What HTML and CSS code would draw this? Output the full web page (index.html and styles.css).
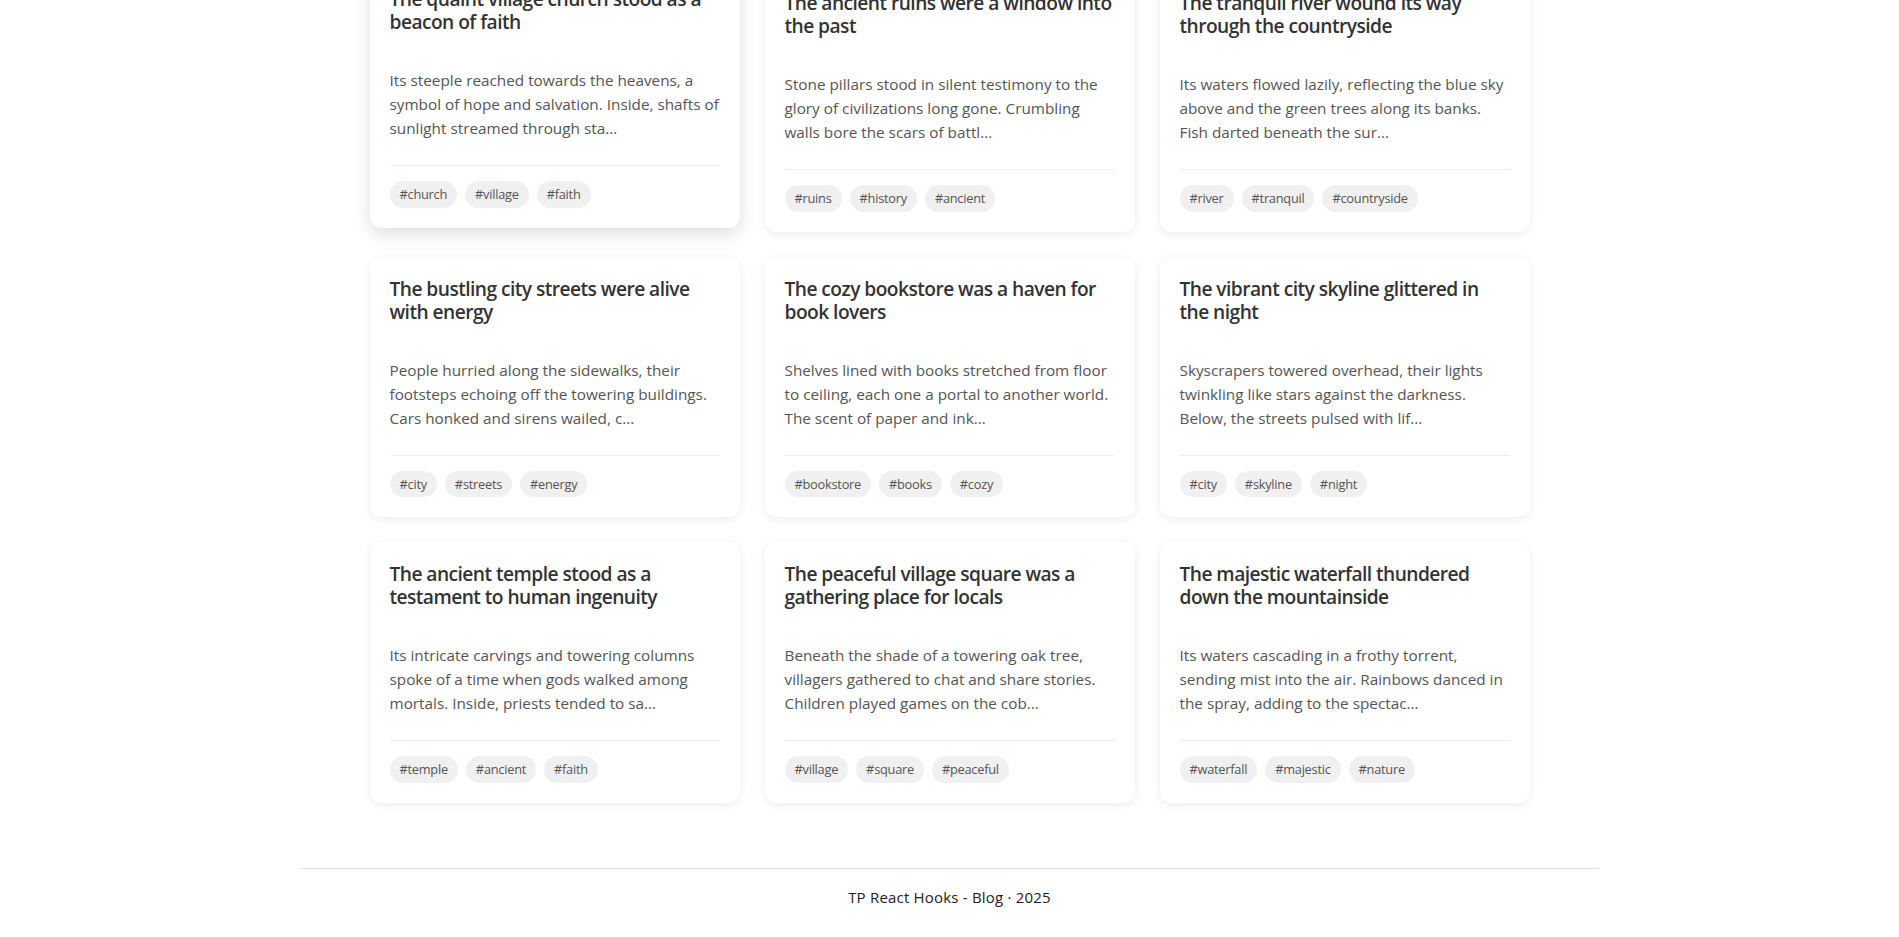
FILE: index.html
```html
<!DOCTYPE html>
<html lang="fr">
<head>
<meta charset="utf-8">
<title>TP React Hooks - Blog</title>
<link rel="stylesheet" href="styles.css">
</head>
<body>
<div class="app">
  <header class="site-header">
    <h1 class="site-title">Blog</h1>
  </header>
  <main class="container">
    <section class="post-grid">
      <article class="card card--hover">
        <h2 class="card-title">The quaint village church stood as a beacon of faith</h2>
        <p class="card-excerpt">Its steeple reached towards the heavens, a symbol of hope and salvation. Inside, shafts of sunlight streamed through sta...</p>
        <div class="card-tags"><span class="tag">#church</span><span class="tag">#village</span><span class="tag">#faith</span></div>
      </article>
      <article class="card">
        <h2 class="card-title">The ancient ruins were a window into the past</h2>
        <p class="card-excerpt">Stone pillars stood in silent testimony to the glory of civilizations long gone. Crumbling walls bore the scars of battl...</p>
        <div class="card-tags"><span class="tag">#ruins</span><span class="tag">#history</span><span class="tag">#ancient</span></div>
      </article>
      <article class="card">
        <h2 class="card-title">The tranquil river wound its way through the countryside</h2>
        <p class="card-excerpt">Its waters flowed lazily, reflecting the blue sky above and the green trees along its banks. Fish darted beneath the sur...</p>
        <div class="card-tags"><span class="tag">#river</span><span class="tag">#tranquil</span><span class="tag">#countryside</span></div>
      </article>
      <article class="card">
        <h2 class="card-title">The bustling city streets were alive with energy</h2>
        <p class="card-excerpt">People hurried along the sidewalks, their footsteps echoing off the towering buildings. Cars honked and sirens wailed, c...</p>
        <div class="card-tags"><span class="tag">#city</span><span class="tag">#streets</span><span class="tag">#energy</span></div>
      </article>
      <article class="card">
        <h2 class="card-title">The cozy bookstore was a haven for book lovers</h2>
        <p class="card-excerpt">Shelves lined with books stretched from floor to ceiling, each one a portal to another world. The scent of paper and ink...</p>
        <div class="card-tags"><span class="tag">#bookstore</span><span class="tag">#books</span><span class="tag">#cozy</span></div>
      </article>
      <article class="card">
        <h2 class="card-title">The vibrant city skyline glittered in the night</h2>
        <p class="card-excerpt">Skyscrapers towered overhead, their lights twinkling like stars against the darkness. Below, the streets pulsed with lif...</p>
        <div class="card-tags"><span class="tag">#city</span><span class="tag">#skyline</span><span class="tag">#night</span></div>
      </article>
      <article class="card">
        <h2 class="card-title">The ancient temple stood as a testament to human ingenuity</h2>
        <p class="card-excerpt">Its intricate carvings and towering columns spoke of a time when gods walked among mortals. Inside, priests tended to sa...</p>
        <div class="card-tags"><span class="tag">#temple</span><span class="tag">#ancient</span><span class="tag">#faith</span></div>
      </article>
      <article class="card">
        <h2 class="card-title">The peaceful village square was a gathering place for locals</h2>
        <p class="card-excerpt">Beneath the shade of a towering oak tree, villagers gathered to chat and share stories. Children played games on the cob...</p>
        <div class="card-tags"><span class="tag">#village</span><span class="tag">#square</span><span class="tag">#peaceful</span></div>
      </article>
      <article class="card">
        <h2 class="card-title">The majestic waterfall thundered down the mountainside</h2>
        <p class="card-excerpt">Its waters cascading in a frothy torrent, sending mist into the air. Rainbows danced in the spray, adding to the spectac...</p>
        <div class="card-tags"><span class="tag">#waterfall</span><span class="tag">#majestic</span><span class="tag">#nature</span></div>
      </article>
    </section>
  </main>
  <footer class="site-footer">
    <p class="footer-text">TP React Hooks - Blog · 2025</p>
  </footer>
</div>
<script src="script.js"></script>
</body>
</html>
```

FILE: styles.css
```css
* { box-sizing: border-box; }

html, body {
  margin: 0;
  padding: 0;
  background: #ffffff;
}

body {
  font-family: "Segoe UI", "Open Sans", "Noto Sans", sans-serif;
  color: #222;
}

.app {
  min-height: 100vh;
}

.site-header {
  max-width: 1160px;
  margin: 0 auto;
  padding: 40px 0 30px;
}

.site-title {
  margin: 0;
  font-size: 32px;
  font-weight: 600;
  color: #222;
}

.container {
  max-width: 1160px;
  margin: 0 auto;
  padding-bottom: 65px;
}

.post-grid {
  display: grid;
  grid-template-columns: repeat(3, 1fr);
  gap: 25px;
}

.card {
  background: #fff;
  border-radius: 12px;
  box-shadow: 0 2px 10px rgba(0, 0, 0, 0.08);
  padding: 20px;
  display: flex;
  flex-direction: column;
  transition: transform .2s, box-shadow .2s;
}

.card--hover {
  transform: translateY(-4px);
  box-shadow: 0 6px 18px rgba(0, 0, 0, 0.13);
}

.card-title {
  margin: 0 0 35px;
  font-size: 19.2px;
  line-height: 23px;
  font-weight: 600;
  color: #333;
  letter-spacing: -0.55px;
}

.card-excerpt {
  margin: 0 0 25px;
  font-size: 15.3px;
  line-height: 24px;
  color: #555;
  letter-spacing: 0;
}

.card-tags {
  margin-top: auto;
  border-top: 1px solid #eee;
  padding-top: 15px;
  display: flex;
  flex-wrap: wrap;
  gap: 8px;
}

.tag {
  background: #f0f0f0;
  border-radius: 999px;
  padding: 4px 10px;
  font-size: 12.8px;
  line-height: 18.7px;
  color: #555;
  letter-spacing: -0.25px;
}

.site-footer {
  max-width: 1298px;
  margin: 0 auto;
  border-top: 1px solid #ddd;
  padding: 16px 0 28px;
  text-align: center;
}

.footer-text {
  margin: 0;
  font-size: 15px;
  line-height: 24px;
  color: #222;
  letter-spacing: 0.2px;
}
```

FILE: script.js
```js
window.scrollTo(0, document.documentElement.scrollHeight);
window.addEventListener('load', function () {
  window.scrollTo(0, document.documentElement.scrollHeight);
});
```
